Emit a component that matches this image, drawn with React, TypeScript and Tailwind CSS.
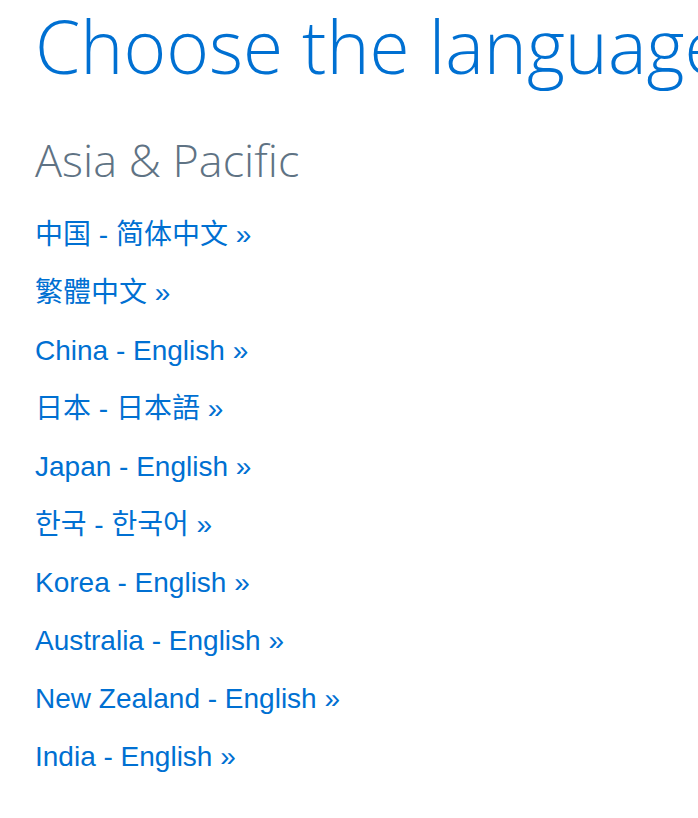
import React from "react";

const links = [
  "中国 - 简体中文 »",
  "繁體中文 »",
  "China - English »",
  "日本 - 日本語 »",
  "Japan - English »",
  "한국 - 한국어 »",
  "Korea - English »",
  "Australia - English »",
  "New Zealand - English »",
  "India - English »",
];

export default function App() {
  return (
    <div className="w-[698px] h-[818px] overflow-hidden bg-white">
      <div className="pl-[35px] pt-[4px]">
        <h1
          className="whitespace-nowrap text-[73px] leading-[84px] font-light text-[#0070d2]"
          style={{ fontFamily: '"Open Sans", "Noto Sans", sans-serif' }}
        >
          Choose the language
        </h1>
        <h2
          className="mt-[46px] text-[45px] leading-[52px] font-light text-[#5f7384]"
          style={{ fontFamily: '"Open Sans", "Noto Sans", sans-serif' }}
        >
          Asia &amp; Pacific
        </h2>
        <ul
          className="mt-[20px] flex flex-col"
          style={{ fontFamily: '"Liberation Sans", Arial, "Noto Sans CJK SC", "Noto Sans CJK JP", "Noto Sans CJK KR", sans-serif' }}
        >
          {links.map((l) => (
            <li key={l} className="h-[58px] flex items-center">
              <a href="#" className="text-[28px] leading-[32px] text-[#0070d2]">
                {l}
              </a>
            </li>
          ))}
        </ul>
      </div>
    </div>
  );
}
